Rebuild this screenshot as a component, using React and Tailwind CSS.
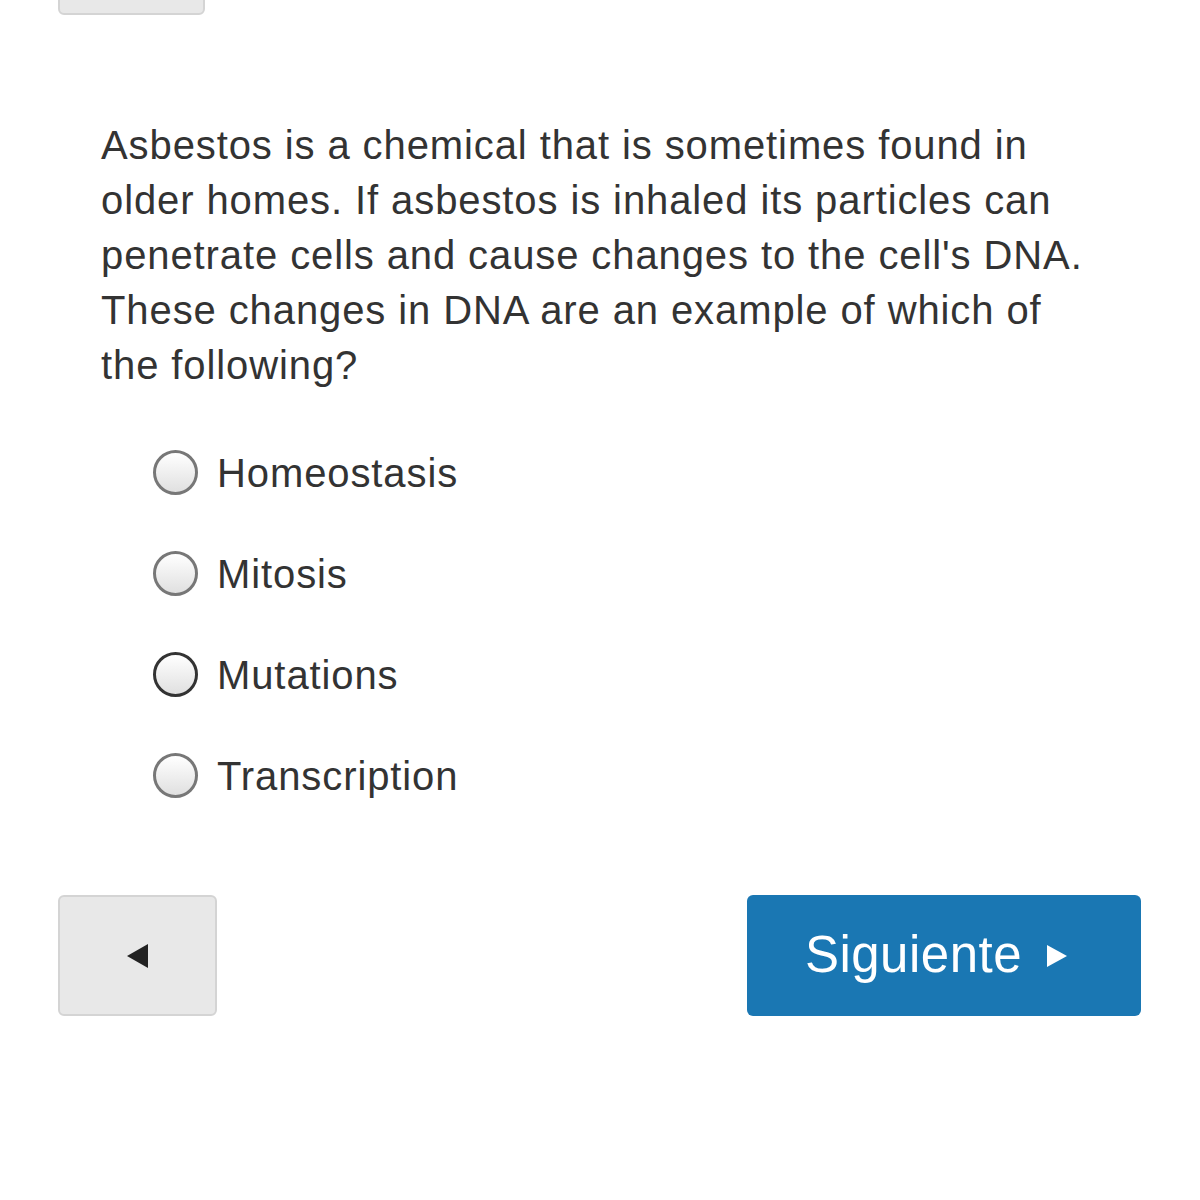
import React from 'react'

const options = ['Homeostasis', 'Mitosis', 'Mutations', 'Transcription']

function Radio({ dark }) {
    return (
        <span
            className={`w-[45px] h-[45px] rounded-full border-[3px] ${dark ? 'border-[#333]' : 'border-[#777]'} bg-gradient-to-b from-white to-[#e0e0e0] shrink-0`}
        />
    )
}

export default function App() {
    return (
        <div className="w-[1200px] h-[1200px] bg-white relative overflow-hidden text-[#333]" style={{ fontFamily: '"Liberation Sans", Arial, sans-serif' }}>
            {/* partial button from previous view */}
            <div className="absolute left-[58px] top-[-40px] w-[147px] h-[55px] bg-[#e8e8e8] border-2 border-[#d4d4d4] rounded-[6px]" />

            <div className="pt-[118px] pl-[101px]">
                <p className="w-[988px] text-[40px] leading-[55px] tracking-[0.9px]">
                    Asbestos is a chemical that is sometimes found in older homes. If asbestos is inhaled its particles can penetrate cells and cause changes to the cell's DNA. These changes in DNA are an example of which of the following?
                </p>

                <div className="mt-[57px] pl-[52px] flex flex-col gap-[56px]">
                    {options.map((opt, i) => (
                        <label key={opt} className="flex items-center gap-[19px] h-[45px]">
                            <Radio dark={i === 2} />
                            <span className="text-[40px] tracking-[0.9px]">{opt}</span>
                        </label>
                    ))}
                </div>
            </div>

            <div className="absolute left-[58px] right-[59px] top-[895px] flex justify-between">
                <button className="w-[159px] h-[121px] bg-[#e8e8e8] border-2 border-[#d4d4d4] rounded-[6px] flex items-center justify-center">
                    <svg width="22" height="24" viewBox="0 0 22 24">
                        <path d="M0 12 L21 0 L21 24 Z" fill="#222" />
                    </svg>
                </button>
                <button className="w-[394px] h-[121px] bg-[#1a77b3] rounded-[6px] flex items-center justify-center gap-[25px] pr-[16px] text-white">
                    <span className="text-[51px] tracking-[0.5px]">Siguiente</span>
                    <svg width="20" height="22" viewBox="0 0 20 22">
                        <path d="M20 11 L0 0 L0 22 Z" fill="#fff" />
                    </svg>
                </button>
            </div>
        </div>
    )
}
